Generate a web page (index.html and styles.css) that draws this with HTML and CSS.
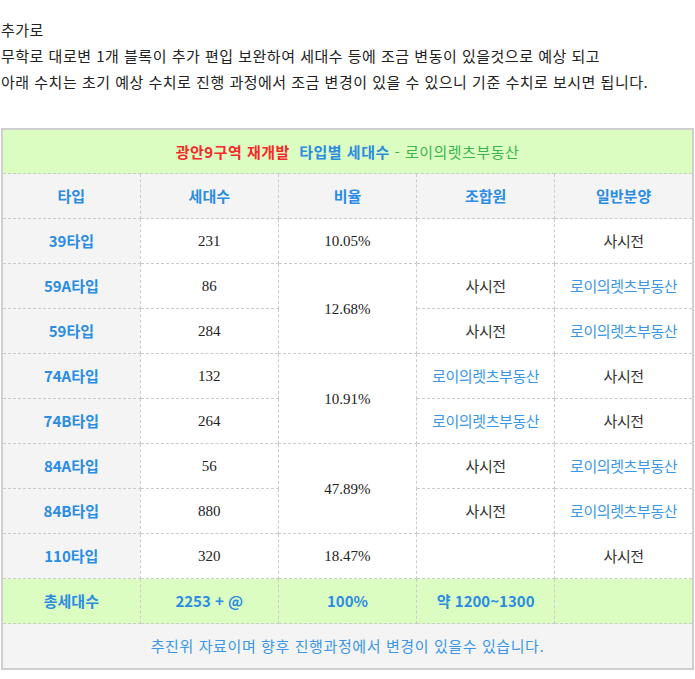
FILE: index.html
```html
<!DOCTYPE html>
<html lang="ko">
<head>
<meta charset="utf-8">
<link rel="stylesheet" href="styles.css">
</head>
<body>
<div class="intro">
  <p>추가로</p>
  <p>무학로 대로변 1개 블록이 추가 편입 보완하여 세대수 등에 조금 변동이 있을것으로 예상 되고</p>
  <p>아래 수치는 초기 예상 수치로 진행 과정에서 조금 변경이 있을 수 있으니 기준 수치로 보시면 됩니다.</p>
</div>
<table class="tbl">
  <colgroup><col><col><col><col><col></colgroup>
  <tr class="title-row">
    <td colspan="5"><span class="red">광안9구역 재개발</span>&nbsp; <span class="blue-b">타입별 세대수</span> <span class="green">- 로이의렛츠부동산</span></td>
  </tr>
  <tr class="head-row">
    <td>타입</td><td>세대수</td><td>비율</td><td>조합원</td><td>일반분양</td>
  </tr>
  <tr>
    <td class="type">39타입</td><td class="num">231</td><td class="num">10.05%</td><td></td><td class="sm">사시전</td>
  </tr>
  <tr>
    <td class="type">59A타입</td><td class="num">86</td><td class="num" rowspan="2">12.68%</td><td class="sm">사시전</td><td class="sm link">로이의렛츠부동산</td>
  </tr>
  <tr>
    <td class="type">59타입</td><td class="num">284</td><td class="sm">사시전</td><td class="sm link">로이의렛츠부동산</td>
  </tr>
  <tr>
    <td class="type">74A타입</td><td class="num">132</td><td class="num" rowspan="2">10.91%</td><td class="sm link">로이의렛츠부동산</td><td class="sm">사시전</td>
  </tr>
  <tr>
    <td class="type">74B타입</td><td class="num">264</td><td class="sm link">로이의렛츠부동산</td><td class="sm">사시전</td>
  </tr>
  <tr>
    <td class="type">84A타입</td><td class="num">56</td><td class="num" rowspan="2">47.89%</td><td class="sm">사시전</td><td class="sm link">로이의렛츠부동산</td>
  </tr>
  <tr>
    <td class="type">84B타입</td><td class="num">880</td><td class="sm">사시전</td><td class="sm link">로이의렛츠부동산</td>
  </tr>
  <tr>
    <td class="type">110타입</td><td class="num">320</td><td class="num">18.47%</td><td></td><td class="sm">사시전</td>
  </tr>
  <tr class="total-row">
    <td>총세대수</td><td>2253 + @</td><td>100%</td><td>약 1200~1300</td><td></td>
  </tr>
  <tr class="note-row">
    <td colspan="5">추진위 자료이며 향후 진행과정에서 변경이 있을수 있습니다.</td>
  </tr>
</table>
</body>
</html>
```

FILE: styles.css
```css
html, body {
  margin: 0;
  padding: 0;
  background: #fff;
}
body {
  font-family: "Noto Sans CJK KR", "Noto Sans", sans-serif;
  color: #222;
}
.intro {
  padding: 17px 0 0 1px;
  margin-bottom: 33px;
  font-size: 15px;
  line-height: 26px;
  letter-spacing: 0.5px;
  color: #222;
}
.intro p {
  margin: 0;
}
.tbl {
  margin-left: 1px;
  width: 693px;
  border-collapse: collapse;
  table-layout: fixed;
  border: 2px solid #cfcfcf;
}
.tbl td {
  border: 1px dashed #cccccc;
  height: 44px;
  padding: 0;
  text-align: center;
  vertical-align: middle;
  font-size: 15px;
  line-height: 20px;
}
.title-row td {
  height: 43px;
  background: #dbfdc1;
  border-top: 2px solid #cfcfcf;
  letter-spacing: 0.5px;
}
.red { color: #f52a2a; font-weight: 700; }
.blue-b { color: #2a8ce3; font-weight: 700; }
.green { color: #3bb54e; }
.head-row td {
  background: #f4f4f4;
  color: #2a8ce3;
  font-weight: 700;
}
.type {
  background: #f4f4f4;
  color: #2a8ce3;
  font-weight: 700;
}
.num {
  color: #222;
  font-family: "Liberation Serif", "Noto Sans CJK KR", serif;
  font-size: 16.5px;
}
.sm {
  font-size: 12.5px;
  letter-spacing: -0.4px;
  color: #333;
}
.link {
  color: #3b97e6;
}
.total-row td {
  background: #dbfdc1;
  color: #2a8ce3;
  font-weight: 700;
}
.note-row td {
  background: #f4f4f4;
  color: #3b97e6;
  border-bottom: 2px solid #cfcfcf;
  letter-spacing: 0.6px;
}
```
